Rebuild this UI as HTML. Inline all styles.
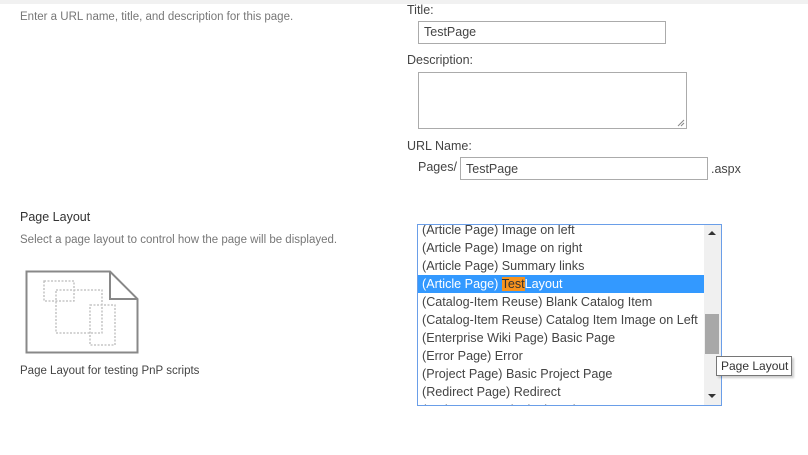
<!DOCTYPE html>
<html><head><style>
body{margin:0;width:808px;height:455px;background:#fff;position:relative;overflow:hidden;font-family:"Liberation Sans",sans-serif;}
.a{position:absolute;white-space:nowrap;}
.g{color:#777;font-size:11.5px;}
.l{color:#444;font-size:12.5px;}
.box{position:absolute;border:1px solid #ababab;background:#fff;box-sizing:border-box;}
.row{height:18px;line-height:18px;padding-left:4px;font-size:12.6px;color:#444;white-space:nowrap;}
</style></head><body>
<div class="a" style="left:0;top:0;width:808px;height:4px;background:#f1f1f1"></div>
<div class="a g" style="left:20px;top:11px">Enter a URL name, title, and description for this page.</div>
<div class="a l" style="left:407px;top:3px">Title:</div>
<div class="box" style="left:418px;top:21px;width:248px;height:23px"><span class="a l" style="left:5px;top:3px">TestPage</span></div>
<div class="a l" style="left:407px;top:53px">Description:</div>
<div class="box" style="left:418px;top:72px;width:269px;height:57px"><svg class="a" style="right:1px;bottom:1px" width="8" height="8"><path d="M7 1L1 7M7 4L4 7" stroke="#888" stroke-width="1"/></svg></div>
<div class="a l" style="left:407px;top:139px">URL Name:</div>
<div class="a l" style="left:418px;top:160px">Pages/</div>
<div class="box" style="left:460px;top:157px;width:248px;height:23px"><span class="a l" style="left:5px;top:4px">TestPage</span></div>
<div class="a l" style="left:711px;top:162px">.aspx</div>

<div class="a l" style="left:20px;top:210px;color:#333">Page Layout</div>
<div class="a g" style="left:20px;top:234px">Select a page layout to control how the page will be displayed.</div>
<svg class="a" style="left:24px;top:269px" width="118" height="86">
<path d="M2.5 2.5H86L113.5 30V83.5H2.5Z" fill="#fff" stroke="#888" stroke-width="2"/>
<path d="M86 2.5V30H113.5" fill="none" stroke="#888" stroke-width="2"/>
<g fill="none" stroke="#bbb" stroke-width="1.3" stroke-dasharray="2,1.5">
<rect x="20" y="12" width="30" height="20"/><rect x="32" y="21" width="46" height="43"/><rect x="66" y="36" width="25" height="40"/>
</g></svg>
<div class="a" style="left:20px;top:365px;font-size:11.5px;color:#444">Page Layout for testing PnP scripts</div>

<div class="a" style="left:417px;top:224px;width:305px;height:182px;border:1px solid #6a9ee8;box-sizing:border-box;overflow:hidden;background:#fff">
<div style="position:absolute;left:0;top:-4px;width:286px">
<div class="row">(Article Page) Image on left</div>
<div class="row">(Article Page) Image on right</div>
<div class="row">(Article Page) Summary links</div>
<div class="row" style="background:#3399ff;color:#fff">(Article Page) <span style="background:#f7931e;color:#333">Test</span>Layout</div>
<div class="row">(Catalog-Item Reuse) Blank Catalog Item</div>
<div class="row">(Catalog-Item Reuse) Catalog Item Image on Left</div>
<div class="row">(Enterprise Wiki Page) Basic Page</div>
<div class="row">(Error Page) Error</div>
<div class="row">(Project Page) Basic Project Page</div>
<div class="row">(Redirect Page) Redirect</div>
<div class="row">(Welcome Page) Blank Web Part page</div>
</div>
<div style="position:absolute;left:286px;top:0;width:17px;height:180px;background:#f0f0f0">
<div style="position:absolute;left:4px;top:6px;width:0;height:0;border-left:4px solid transparent;border-right:4px solid transparent;border-bottom:4px solid #333"></div>
<div style="position:absolute;left:1px;top:89px;width:14px;height:40px;background:#a8a8a8"></div>
<div style="position:absolute;left:4px;top:169px;width:0;height:0;border-left:4px solid transparent;border-right:4px solid transparent;border-top:4px solid #333"></div>
</div></div>
<div class="a" style="left:716px;top:356px;width:76px;height:20px;border:1px solid #767676;box-sizing:border-box;background:#fff;font-size:12px;color:#333;line-height:18px;padding-left:4px;box-shadow:2px 2px 2px rgba(0,0,0,.2)">Page Layout</div>
</body></html>
